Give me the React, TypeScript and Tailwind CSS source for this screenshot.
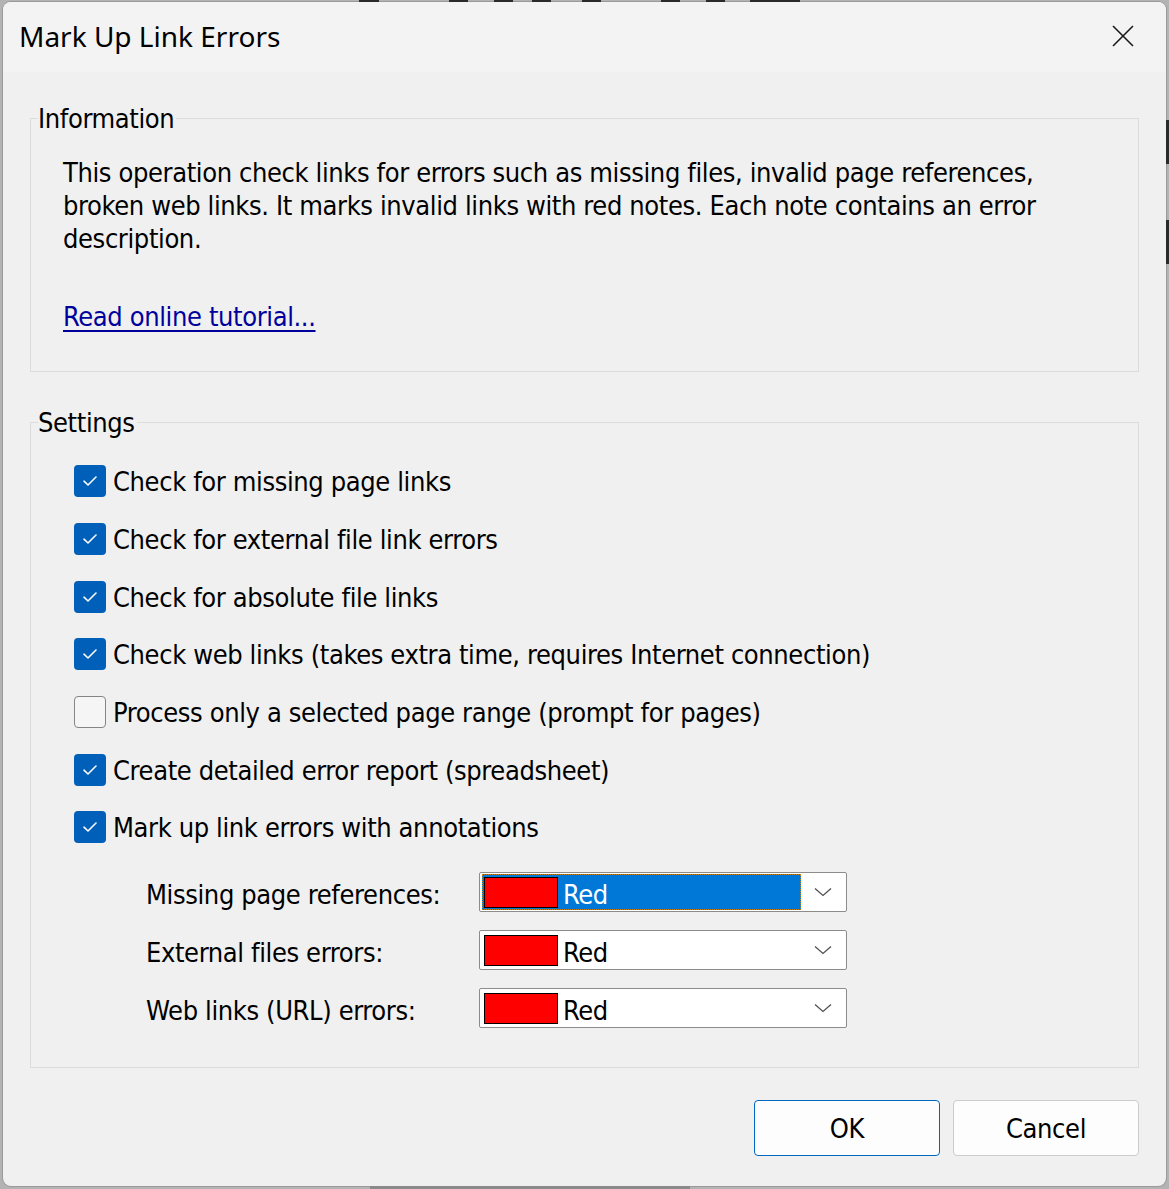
import React from "react";

const BODY = "font-['DejaVu_Sans_Condensed','DejaVu_Sans',sans-serif] tracking-[-0.38px]";

function Check({ checked }: { checked: boolean }) {
  return checked ? (
    <div className="w-[32px] h-[32px] rounded-[4px] bg-[#005fb8] flex items-center justify-center shrink-0">
      <svg width="16" height="12" viewBox="0 0 16 12" fill="none">
        <path d="M2 6.2 L6 10 L14 2" stroke="#ffffff" strokeWidth="1.6" strokeLinecap="round" strokeLinejoin="round" />
      </svg>
    </div>
  ) : (
    <div className="w-[32px] h-[32px] rounded-[4px] border-[1.5px] border-[#858585] bg-[#f5f5f5] shrink-0" />
  );
}

function Combo({ focused }: { focused?: boolean }) {
  return (
    <div className="w-[368px] h-[40px] border border-[#8c8c8c] rounded-[2px] bg-white flex items-center pl-[2px] pr-[14px]">
      <div
        className={
          "h-[36px] w-[319px] flex items-center pl-[2px] " +
          (focused ? "bg-[#0078d7] outline-1 outline-dotted outline-[#c08020] -outline-offset-1" : "")
        }
      >
        <div className="w-[74px] h-[31px] bg-[#ff0000] border border-black shrink-0" />
        <span className={"ml-[5px] pt-[4px] text-[27px] leading-none " + (focused ? "text-white" : "text-black")}>Red</span>
      </div>
      <div className="flex-1 flex justify-end">
        <svg width="18" height="10" viewBox="0 0 18 10" fill="none">
          <path d="M1 1.5 L9 8.5 L17 1.5" stroke="#505050" strokeWidth="1.3" />
        </svg>
      </div>
    </div>
  );
}

export default function App() {
  const checks: [string, boolean][] = [
    ["Check for missing page links", true],
    ["Check for external file link errors", true],
    ["Check for absolute file links", true],
    ["Check web links (takes extra time, requires Internet connection)", true],
    ["Process only a selected page range (prompt for pages)", false],
    ["Create detailed error report (spreadsheet)", true],
    ["Mark up link errors with annotations", true],
  ];
  const combos = ["Missing page references:", "External files errors:", "Web links (URL) errors:"];

  return (
    <div className="w-[1169px] h-[1189px] bg-[#b3b3b3] relative overflow-hidden pt-[2px] pl-[3px] pr-[3px] pb-[3px]">
      {/* backdrop fragments */}
      <div className="absolute top-0 left-[359px] w-[20px] h-[2px] bg-[#2a2a2a]" />
      <div className="absolute top-0 left-[449px] w-[19px] h-[2px] bg-[#2a2a2a]" />
      <div className="absolute top-0 left-[494px] w-[19px] h-[2px] bg-[#2a2a2a]" />
      <div className="absolute top-0 left-[532px] w-[19px] h-[2px] bg-[#2a2a2a]" />
      <div className="absolute top-0 left-[582px] w-[19px] h-[2px] bg-[#2a2a2a]" />
      <div className="absolute top-0 left-[661px] w-[19px] h-[2px] bg-[#2a2a2a]" />
      <div className="absolute top-0 left-[706px] w-[19px] h-[2px] bg-[#2a2a2a]" />
      <div className="absolute top-0 left-[750px] w-[50px] h-[2px] bg-[#2a2a2a]" />
      <div className="absolute top-[120px] right-0 w-[3px] h-[44px] bg-[#2a2a2a]" />
      <div className="absolute top-[220px] right-0 w-[3px] h-[44px] bg-[#2a2a2a]" />
      <div className="absolute bottom-0 left-[370px] w-[320px] h-[3px] bg-[#8a8a8a]" />

      <div className="w-full h-full rounded-[8px] bg-[#f0f0f0] overflow-hidden flex flex-col shadow-[0_0_0_1px_#9a9a9a]">
        {/* Title bar */}
        <div className="h-[70px] bg-[#f3f3f3] flex items-center justify-between pl-[16px] pr-[32px] shrink-0">
          <span className="font-['Noto_Sans',sans-serif] text-[28px] text-black leading-none -mt-[2px]">Mark Up Link Errors</span>
          <svg width="22" height="22" viewBox="0 0 22 22" fill="none" className="-mt-[2px]">
            <path d="M1 1 L21 21 M21 1 L1 21" stroke="#1a1a1a" strokeWidth="1.6" />
          </svg>
        </div>

        <div className={"flex-1 flex flex-col px-[27px] pt-[29.5px] text-black text-[27px] " + BODY}>
          <fieldset className="border border-[#dcdcdc] pl-[32px] pr-[20px] pt-[21px] pb-[38px]">
            <legend className="-ml-[25px] leading-[33px] pr-[2px]">Information</legend>
            <p className="leading-[33px]">
              This operation check links for errors such as missing files, invalid page references,
              <br />
              broken web links. It marks invalid links with red notes. Each note contains an error
              <br />
              description.
            </p>
            <a className="block mt-[45px] leading-[33px] text-[#00009c] underline underline-offset-[4px] decoration-[1.5px] w-fit">
              Read online tutorial...
            </a>
          </fieldset>

          <fieldset className="border border-[#dcdcdc] mt-[34px] pl-[43px] pr-[20px] pt-[14px] pb-[30px]">
            <legend className="-ml-[36px] leading-[33px] pr-[2px]">Settings</legend>
            {checks.map(([label, on]) => (
              <div key={label} className="h-[57.67px] flex items-center gap-[7px]">
                <Check checked={on} />
                <span className="leading-none pt-[1px]">{label}</span>
              </div>
            ))}
            <div className="mt-[7px] pl-[72px]">
              {combos.map((c, i) => (
                <div key={c} className="h-[58px] flex items-center">
                  <span className="w-[333px] leading-none pt-[4px]">{c}</span>
                  <Combo focused={i === 0} />
                </div>
              ))}
            </div>
          </fieldset>

          <div className="flex justify-end gap-[13px] mt-[31.5px]">
            <button className="w-[186px] h-[56px] bg-[#fdfdfd] border-[1.5px] border-[#0067c0] rounded-[4px] text-[27px] leading-none pt-[2px]">
              OK
            </button>
            <button className="w-[186px] h-[56px] bg-[#fdfdfd] border border-[#cccccc] rounded-[4px] text-[27px] leading-none pt-[2px]">
              Cancel
            </button>
          </div>
        </div>
      </div>
    </div>
  );
}
